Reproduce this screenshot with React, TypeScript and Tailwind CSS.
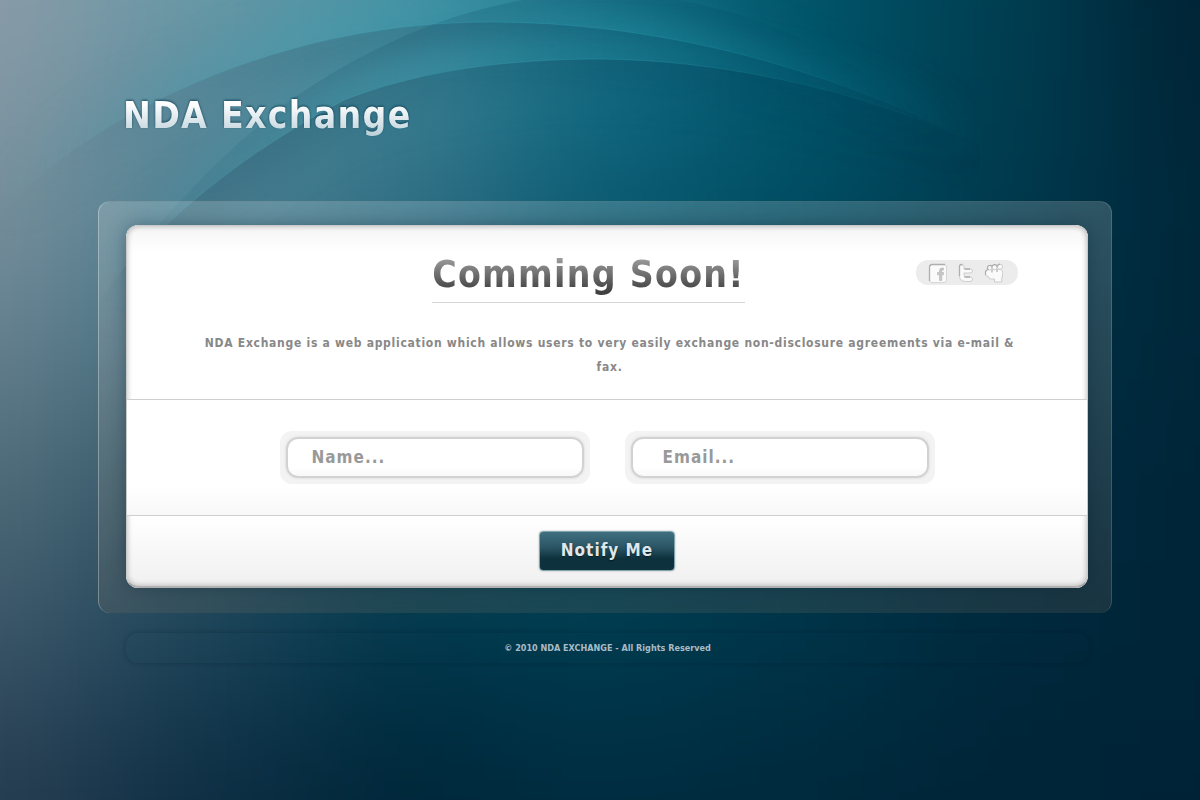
import { useState } from "react";

// colour samples of the backdrop, one row per 160px, one column per 200px
const backdrop = [
  ["#8b9ba8", "#6a9aa8", "#4a97a8", "#1a778b", "#00566b", "#003f52", "#002234"],
  ["#7d94a0", "#508496", "#357286", "#0b6078", "#005066", "#003c50", "#002639"],
  ["#6a8391", "#427284", "#2a6880", "#085068", "#004458", "#003549", "#002639"],
  ["#4f6c78", "#2e5466", "#155064", "#004458", "#003a50", "#002c40", "#002438"],
  ["#3a5468", "#1c4358", "#003549", "#003c50", "#003448", "#00293d", "#002438"],
  ["#253b4f", "#0c2c42", "#002538", "#002b3f", "#00283b", "#002337", "#002236"],
];

const arcA =
  "M-20 232C60 150 110 125 168 95C280 42 390 22 490 22C650 22 790 62 898 107C930 121 955 132 980 145";
const arcB =
  "M120 272C190 195 260 145 344 100C420 70 510 59 600 59C720 60 830 88 898 112C930 123 955 134 980 145";
const arcC =
  "M100 300C170 205 230 145 298 95C380 40 480 -6 606 -8C720 -4 810 40 850 64C890 92 930 120 980 145";

function Backdrop() {
  return (
    <svg
      className="absolute inset-0 h-full w-full"
      viewBox="0 0 1200 800"
      preserveAspectRatio="none"
      aria-hidden="true"
    >
      <defs>
        <filter
          id="soften"
          filterUnits="userSpaceOnUse"
          x="-300"
          y="-300"
          width="1800"
          height="1400"
          colorInterpolationFilters="sRGB"
        >
          <feGaussianBlur stdDeviation="76" />
        </filter>
        <filter
          id="glow"
          filterUnits="userSpaceOnUse"
          x="-100"
          y="-100"
          width="1400"
          height="600"
          colorInterpolationFilters="sRGB"
        >
          <feGaussianBlur stdDeviation="18" />
        </filter>
        <linearGradient id="cyan" gradientUnits="userSpaceOnUse" x1="0" y1="0" x2="980" y2="0">
          <stop offset="0" stopColor="#4fa9bb" stopOpacity="0" />
          <stop offset="0.3" stopColor="#45a9bb" stopOpacity="0.32" />
          <stop offset="0.65" stopColor="#2a9aae" stopOpacity="0.35" />
          <stop offset="1" stopColor="#0a8296" stopOpacity="0" />
        </linearGradient>
        <linearGradient id="shade" gradientUnits="userSpaceOnUse" x1="0" y1="0" x2="980" y2="0">
          <stop offset="0" stopColor="#2a5a72" stopOpacity="0" />
          <stop offset="0.3" stopColor="#23586e" stopOpacity="0.3" />
          <stop offset="0.65" stopColor="#0a4a66" stopOpacity="0.28" />
          <stop offset="1" stopColor="#003f5c" stopOpacity="0" />
        </linearGradient>
        <clipPath id="aboveA">
          <path d={`${arcA}V-100H-20Z`} />
        </clipPath>
        <clipPath id="belowA">
          <path d={`${arcA}V800H-20Z`} />
        </clipPath>
        <clipPath id="aboveB">
          <path d={`${arcB}V-100H-20V272Z`} />
        </clipPath>
        <clipPath id="belowB">
          <path d={`${arcB}V800H120Z`} />
        </clipPath>
        <clipPath id="belowC">
          <path d={`${arcC}V800H100Z`} />
        </clipPath>
      </defs>
      <g filter="url(#soften)">
        {backdrop.map((row, y) =>
          row.map((color, x) => (
            <rect
              key={`${x}-${y}`}
              x={x === 0 ? -300 : x * 200 - 100}
              y={y === 0 ? -300 : y * 160 - 80}
              width={x === 0 ? 401 : x === 6 ? 400 : 201}
              height={y === 0 ? 381 : y === 5 ? 380 : 161}
              fill={color}
            />
          ))
        )}
      </g>
      <g fill="none">
        <g clipPath="url(#aboveA)">
          <path d={arcA} stroke="url(#cyan)" strokeWidth="50" filter="url(#glow)" />
        </g>
        <g clipPath="url(#belowA)">
          <path d={arcA} stroke="url(#shade)" strokeWidth="40" filter="url(#glow)" />
        </g>
        <g clipPath="url(#belowC)">
          <path d={arcC} stroke="url(#shade)" strokeWidth="40" filter="url(#glow)" />
        </g>
        <g clipPath="url(#aboveB)">
          <path d={arcB} stroke="url(#cyan)" strokeWidth="36" filter="url(#glow)" />
        </g>
        <g clipPath="url(#belowB)">
          <path d={arcB} stroke="url(#shade)" strokeWidth="60" filter="url(#glow)" />
        </g>
        <path d={arcA} stroke="url(#cyan)" />
        <path d={arcB} stroke="url(#cyan)" />
      </g>
    </svg>
  );
}

const iconClass = "h-5 w-5 fill-[#fafafa] stroke-[#cccccc]";

function FacebookIcon() {
  return (
    <svg viewBox="0 0 20 20" className={iconClass} aria-hidden="true">
      <rect x="1.500" y="1.500" width="17" height="18" rx="2.500" stroke="#d6d6d6" />
      <path d="M1.500 18V4Q1.500 1.500 4 1.500H17" fill="none" stroke="#aeaeae" strokeWidth="1.300" />
      <path
        d="M11.500 17.500V11.800H9.500V9.500H11.500V8Q11.500 5 14 5H15.500V7H14.800Q13.800 7 13.800 8.200V9.500H15.500V11.800H13.800V17.500Z"
        fill="#c6c6c6"
        stroke="#b6b6b6"
        strokeWidth="0.6"
      />
    </svg>
  );
}

function TwitterIcon() {
  return (
    <svg viewBox="0 0 20 20" className={iconClass} aria-hidden="true">
      <path d="M3.500 3.500Q3.500 1.500 5.500 1.500T8 3.500V6H14Q16.500 6 16.500 8T14 10H8V11.500Q8 14 10.500 14H14Q16.500 14 16.500 16.200T14 18.500H9.500Q3.500 18.500 3.500 13Z" />
      <path
        d="M3.500 13V3.500Q3.500 1.500 5.500 1.500H6.500M8.500 6H14M8.500 14H14"
        fill="none"
        stroke="#aeaeae"
        strokeWidth="1.300"
      />
    </svg>
  );
}

function MyspaceIcon() {
  return (
    <svg viewBox="0 0 20 20" className={iconClass} aria-hidden="true">
      <path d="M1.500 9.500Q1.500 7 4 6.500H17Q18.500 7 18.500 9.500V13L17.800 15V19H10.500V16H6.500Q4.500 16 4.500 13.500L1.500 12.500Z" />
      <circle cx="5.500" cy="4.800" r="2.300" />
      <circle cx="10.500" cy="4.200" r="2.500" />
      <circle cx="16" cy="3.800" r="2.600" />
      <path
        d="M1.500 12V9.500Q1.500 7 4 6.500Q2.700 3 5.500 2.500Q7.200 2.200 8 3.500Q9 1.600 10.800 1.700Q12.500 1.800 13.200 3.200Q14 1.200 16 1.200M8 7V9.500M13 7V9"
        fill="none"
        stroke="#aeaeae"
        strokeWidth="1.200"
      />
    </svg>
  );
}

const socials = [
  { name: "Facebook", Icon: FacebookIcon },
  { name: "Twitter", Icon: TwitterIcon },
  { name: "MySpace", Icon: MyspaceIcon },
];

type FieldProps = {
  id: string;
  type: string;
  label: string;
  value: string;
  padding: string;
  onChange: (value: string) => void;
};

function Field({ id, type, label, value, padding, onChange }: FieldProps) {
  return (
    <div className="w-[310px] rounded-xl bg-[#f3f3f3] p-1.5">
      <label htmlFor={id} className="sr-only">
        {label}
      </label>
      <input
        id={id}
        type={type}
        value={value}
        onChange={(e) => onChange(e.target.value)}
        placeholder={`${label}...`}
        className={`block w-full rounded-xl border-2 border-[#d2d2d2] bg-linear-to-b from-white from-75% to-[#f8f8f8] py-1.5 pr-5 text-[17px] leading-[25px] font-bold tracking-[1px] text-[#777777] shadow-[0_0_3px_rgba(0,0,0,0.12)] outline-none placeholder:text-[#999999] ${padding}`}
      />
    </div>
  );
}

export default function App() {
  const [name, setName] = useState("");
  const [email, setEmail] = useState("");

  return (
    <div className="relative isolate min-h-screen overflow-hidden bg-[#002236] pr-[88px] pl-[98px] font-['DejaVu_Sans_Condensed','DejaVu_Sans',sans-serif] font-bold">
      <Backdrop />
      <div className="relative">
        <header className="px-[25px] pt-[95px] pb-16">
          <h1 className="w-fit bg-linear-to-b from-white from-20% to-[#b9cfd8] bg-clip-text text-[37px] leading-[42px] tracking-[0.035em] text-transparent drop-shadow-[0_-1px_1px_rgba(10,60,80,0.8)]">
            NDA Exchange
          </h1>
        </header>

        <main className="rounded-xl border border-b-0 border-white/15 border-l-white/30 bg-linear-to-b from-white/18 to-[#8c7864]/18 pt-[23px] pr-[23px] pb-[25px] pl-[27px]">
          <div className="overflow-hidden rounded-xl bg-white shadow-[0_0_18px_rgba(0,30,45,0.35)]">
            <div className="rounded-xl border border-[#c9c9c9] border-b-2 border-b-[#b0b0b0] shadow-[inset_0_0_5px_1px_rgba(0,0,0,0.22)]">
              <section className="bg-linear-to-b from-black/4 to-transparent to-15% pt-[26px] pr-[69px] pb-5 pl-[74px]">
                <div className="flex items-start">
                  <div className="flex-1 pl-[60px] text-center">
                    <h2 className="inline-block border-b border-[#d4d4d4] pb-1 text-[37px] leading-[46px] tracking-[0.035em]">
                      <span className="bg-linear-to-b from-[#999999] from-15% to-[#404040] to-90% bg-clip-text text-transparent">
                        Comming Soon!
                      </span>
                    </h2>
                  </div>
                  <nav className="mt-2 flex h-[25px] items-center gap-2 rounded-xl bg-[#ececec] pr-3.5 pl-3">
                    {socials.map(({ name, Icon }) => (
                      <a key={name} href="#" aria-label={name}>
                        <Icon />
                      </a>
                    ))}
                  </nav>
                </div>
                <p className="mt-7 text-center text-[12px] leading-6 tracking-[0.06em] text-[#888888]">
                  NDA Exchange is a web application which allows users to very easily exchange
                  non-disclosure agreements via e-mail &amp; fax.
                </p>
              </section>

              <form onSubmit={(e) => e.preventDefault()}>
                <div className="flex flex-wrap justify-center gap-[35px] border-y border-[#cfcfcf] bg-linear-to-b from-white from-75% to-[#f8f8f8] py-[31px]">
                  <Field
                    id="name"
                    type="text"
                    label="Name"
                    value={name}
                    padding="pl-6"
                    onChange={setName}
                  />
                  <Field
                    id="email"
                    type="email"
                    label="Email"
                    value={email}
                    padding="pl-[30px]"
                    onChange={setEmail}
                  />
                </div>
                <div className="flex justify-center bg-linear-to-b from-transparent to-black/6 py-[15px]">
                  <button
                    type="submit"
                    className="h-10 w-[136px] cursor-pointer rounded border border-[#7fa3ab] bg-linear-to-b from-[#3f7080] via-[#2b5565] via-40% to-[#0e323d] to-70% text-[17px] tracking-[1px] text-[#dfe7ea] shadow-[0_0_2px_rgba(0,0,0,0.3)] text-shadow-[0_1px_2px_rgba(0,0,0,0.6)]"
                  >
                    Notify Me
                  </button>
                </div>
              </form>
            </div>
          </div>
        </main>

        <footer className="mt-5 mr-[23px] ml-7 rounded-xl text-center text-[9px] leading-[30px] text-[#a9bcc6] shadow-[0_0_5px_rgba(0,20,35,0.3)]">
          © 2010 NDA EXCHANGE - All Rights Reserved
        </footer>
      </div>
    </div>
  );
}
